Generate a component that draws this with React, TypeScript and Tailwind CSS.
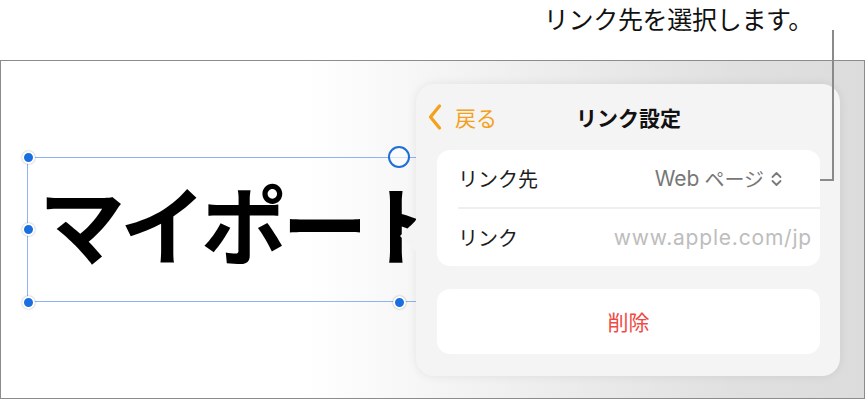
import React from 'react';

const jp = '"Noto Sans CJK JP", "Noto Sans", sans-serif';
const latin = '"Inter", "Noto Sans CJK JP", sans-serif';

function Handle({ x, y, open = false }: { x: number; y: number; open?: boolean }) {
  if (open) {
    return (
      <div
        className="absolute w-[22px] h-[22px] rounded-full border-2 border-[#1f6fd6] bg-white/60"
        style={{ left: x - 11, top: y - 11 }}
      />
    );
  }
  return (
    <div
      className="absolute w-[13px] h-[13px] rounded-full bg-[#1a6fe0] border-2 border-white shadow-[0_0_2px_rgba(0,0,0,0.35)]"
      style={{ left: x - 6.5, top: y - 6.5 }}
    />
  );
}

function ChevronUpDown() {
  return (
    <svg width="13" height="20" viewBox="0 0 13 20" fill="none" className="ml-[6px]">
      <path d="M2.5 8 L6.5 4 L10.5 8" stroke="#7a7a7a" strokeWidth="1.8" strokeLinecap="round" strokeLinejoin="round" />
      <path d="M2.5 12 L6.5 16 L10.5 12" stroke="#7a7a7a" strokeWidth="1.8" strokeLinecap="round" strokeLinejoin="round" />
    </svg>
  );
}

function LinkPopover() {
  return (
    <div className="absolute left-[415px] top-[23px] w-[424px] h-[292px]">
      {/* arrow notch on the left edge */}
      <svg className="absolute left-[-17px] top-[124px]" width="20" height="56" viewBox="0 0 20 56">
        <path d="M20 0 C20 10 16 14 10 19 L1 28 L10 37 C16 42 20 46 20 56 Z" fill="#f4f4f4" />
      </svg>
      <div className="w-full h-full rounded-[18px] bg-[#f4f4f4] shadow-[0_0_10px_rgba(0,0,0,0.08)] flex flex-col px-[21px] pr-[20px]">
        <div className="relative h-[66px] flex items-center justify-center">
          <div className="absolute left-[-10px] top-0 h-full flex items-center">
            <svg width="16" height="28" viewBox="0 0 16 28" fill="none">
              <path d="M12.5 3 L3.5 14 L12.5 25" stroke="#f5a01a" strokeWidth="3.2" strokeLinecap="round" strokeLinejoin="round" />
            </svg>
            <span className="ml-[12px] text-[21px] leading-none text-[#f5a01a]" style={{ fontFamily: jp }}>戻る</span>
          </div>
          <span className="text-[21px] font-bold text-[#111] leading-none" style={{ fontFamily: jp }}>
            リンク設定
          </span>
        </div>
        <div className="bg-white rounded-[13px] flex flex-col">
          <div className="h-[57px] flex items-center pl-[21px] pr-[37px] justify-between">
            <span className="text-[20px] text-[#1c1c1c]" style={{ fontFamily: jp }}>リンク先</span>
            <span className="flex items-center text-[20px] text-[#777]">
              <span className="text-[21px] mr-[5px]" style={{ fontFamily: latin }}>Web</span>
              <span style={{ fontFamily: jp }}>ページ</span>
              <ChevronUpDown />
            </span>
          </div>
          <div className="ml-[21px] h-[2px] bg-[#efefef]" />
          <div className="h-[57px] flex items-center pl-[21px] pr-[8px] justify-between">
            <span className="text-[20px] text-[#1c1c1c]" style={{ fontFamily: jp }}>リンク</span>
            <span className="text-[21px] tracking-[0.8px] text-[#bdbdbd]" style={{ fontFamily: latin }}>
              www.apple.com/jp
            </span>
          </div>
        </div>
        <div className="mt-[23px] h-[65px] bg-white rounded-[13px] flex items-center justify-center">
          <span className="text-[21px] text-[#ef4a44]" style={{ fontFamily: jp }}>削除</span>
        </div>
      </div>
    </div>
  );
}

export default function App() {
  return (
    <div className="relative w-[865px] h-[399px] bg-white overflow-hidden">
      <div className="h-[60px] flex justify-end pr-[52px] pt-[1px]">
        <span className="text-[25px] text-[#111] leading-[34px] tracking-[-0.3px]" style={{ fontFamily: jp }}>
          リンク先を選択します。
        </span>
      </div>
      <div className="relative h-[339px] border-[1.5px] border-[#8c8c8c] overflow-hidden bg-[linear-gradient(90deg,#ffffff_0%,#ffffff_35%,#f2f2f2_55%,#e0e0e0_85%,#dcdcdc_100%)]">
        {/* selection frame */}
        <div className="absolute left-[26px] top-[96px] w-[390px] h-[145px] border-t border-b border-l border-[#8fb3ee]" />
        <div
          className="absolute left-[38px] top-[118px] text-[86px] font-bold text-black leading-none tracking-[-5px]"
          style={{ fontFamily: jp }}
        >
          マイポート
        </div>
        <Handle x={27} y={96} />
        <Handle x={27} y={168} />
        <Handle x={27} y={241} />
        <Handle x={398} y={241} />
        <Handle x={398} y={96} open />
        <LinkPopover />
      </div>
      {/* callout line */}
      <div className="absolute left-[832px] top-[30px] w-[2px] h-[151px] bg-[#8a8a8a]" />
      <div className="absolute left-[820px] top-[179px] w-[14px] h-[2px] bg-[#8a8a8a]" />
    </div>
  );
}
